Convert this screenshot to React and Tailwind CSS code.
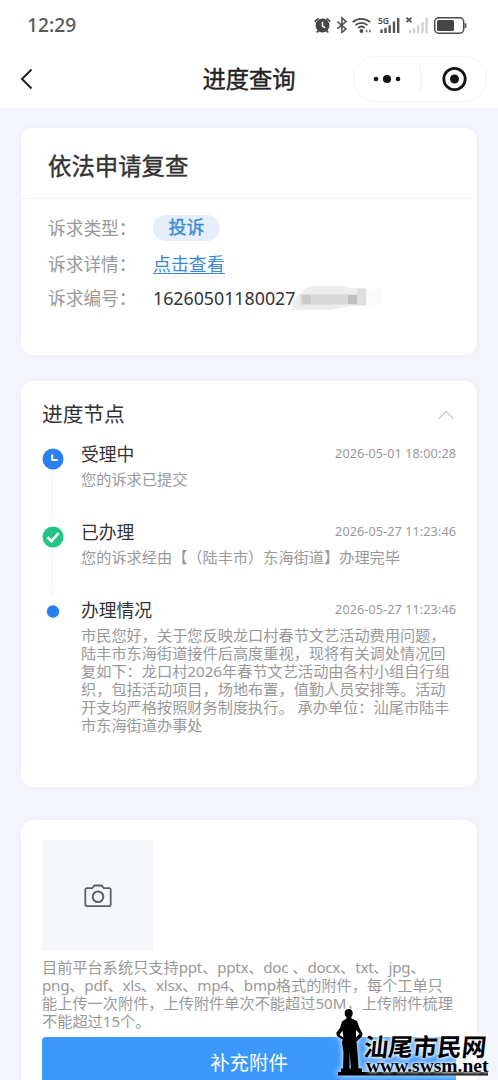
import React from 'react';
import { clsx } from 'clsx';

const StatusIcons = () => (
    <svg width="158" height="24" viewBox="0 0 158 24" className="block" fill="none">
        {/* alarm */}
        <circle cx="10.5" cy="12.5" r="6.9" fill="#454545" />
        <path d="M10.5 8.7v4.3l2.8 1.8" stroke="#fff" strokeWidth="1.5" />
        <path d="M2.7 8.6l3.8-3.3M18.3 8.6l-3.8-3.3M6.5 17.5l-1.7 2M14.500 17.500l1.700 2" stroke="#454545" strokeWidth="1.7" />
        {/* bluetooth */}
        <path d="M25.3 8.7l8.8 7.3-4.2 3.4V5l4.2 3.6-8.8 7.1" stroke="#555" strokeWidth="1.6" />
        {/* wifi */}
        <path d="M40.7 9.2c5-4.5 12.5-4.5 17.5 0M43.5 12.2c3.5-3.2 8.400-3.200 11.900 0M46.200 15c2-1.800 4.500-1.800 6.400 0" stroke="#4a4a4a" strokeWidth="1.8" />
        <circle cx="49.4" cy="18" r="1.9" fill="#4a4a4a" />
        <path d="M53 18l2.500-1.700v3.400zM59.500 18l-2.500-1.700v3.400z" fill="#777" />
        {/* signal */}
        <path d="M69.5 16.5v3.5M73.5 14.8v5.2M77.7 12.2v7.8M82 8.5v11.5M86.2 5v15" stroke="#555" strokeWidth="2.4" />
        <path d="M94.500 4.600l5 4.500M99.500 4.600l-5 4.500" stroke="#555" strokeWidth="1.8" />
        <path d="M98 17v3M102 15.200v4.800M106.200 12.500v7.500M110.500 9v11M114.600 5v15" stroke="#d2d2d2" strokeWidth="2.400" />
        {/* battery */}
        <rect x="122.700" y="4.800" width="29" height="15.400" rx="4" stroke="#4a4a4a" strokeWidth="1.500" />
        <rect x="125" y="7" width="17" height="11" rx="1.500" fill="#454545" />
        <path d="M153.500 10.300v4.600" stroke="#555" strokeWidth="1.800" />
    </svg>
);

const ClockDot = () => (
    <svg width="22" height="22" viewBox="0 0 22 22">
        <circle cx="11" cy="11" r="10.500" fill="#2b7ff0" />
        <path d="M10.200 6.500v5.600h5.500" fill="none" stroke="#fff" strokeWidth="2" />
    </svg>
);

const CheckDot = () => (
    <svg width="22" height="22" viewBox="0 0 22 22">
        <circle cx="11" cy="11" r="10.500" fill="#1ec684" />
        <path d="M5.300 11.200l4.200 3.900 7.100-8" fill="none" stroke="#fff" strokeWidth="2.800" />
    </svg>
);

const BlueDot = () => (
    <svg width="22" height="22" viewBox="0 0 22 22">
        <circle cx="11" cy="7.500" r="6.200" fill="#2b80f0" />
    </svg>
);

const Mosaic = () => (
    <svg width="96" height="30" viewBox="0 0 96 30" className="-ml-1 block">
        <path d="M8 11L18 3h34l5 2h18v18H60l-21 4H2V19z" fill="#eeeeee" />
        <path d="M9 11h66v11H9z" fill="#e0e0e0" />
        <path d="M11 12h9v9h-9z" fill="#cbcbcb" />
        <path d="M20 12h37v9H20z" fill="#d8d8d8" />
        <path d="M57 12h9v9h-9z" fill="#bfbfbf" />
        <path d="M66 6h9v16h-9z" fill="#dedede" />
        <path d="M75 6h16v16H75z" fill="#fbfbfb" />
    </svg>
);

const steps = [
    { title: '受理中', time: '2026-05-01 18:00:28', icon: ClockDot, lines: ['您的诉求已提交'] },
    { title: '已办理', time: '2026-05-27 11:23:46', icon: CheckDot, lines: ['您的诉求经由【（陆丰市）东海街道】办理完毕'] },
    {
        title: '办理情况',
        time: '2026-05-27 11:23:46',
        icon: BlueDot,
        lines: [
            '市民您好，关于您反映龙口村春节文艺活动费用问题，',
            '陆丰市东海街道接件后高度重视，现将有关调处情况回',
            '复如下：龙口村2026年春节文艺活动由各村小组自行组',
            '织，包括活动项目，场地布置，值勤人员安排等。活动',
            '开支均严格按照财务制度执行。 承办单位：汕尾市陆丰',
            '市东海街道办事处',
        ],
    },
];

const hints = [
    '目前平台系统只支持ppt、pptx、doc 、docx、txt、jpg、',
    'png、pdf、xls、xlsx、mp4、bmp格式的附件，每个工单只',
    '能上传一次附件，上传附件单次不能超过50M，上传附件梳理',
    '不能超过15个。',
];

// latin runs are set slightly tighter than the Chinese text
const Line = ({ text }) => (
    <p className="whitespace-nowrap">
        {text.split(/([a-z]+\d?)/).map((part, i) => (
            i % 2 ? <span key={i} className="tracking-[-0.3px]">{part}</span> : part
        ))}
    </p>
);

const Card = ({ className, children }) => (
    <section className={clsx('mx-[21px] rounded-xl bg-white shadow-[0_0_10px_rgba(0,0,0,0.045)]', className)}>
        {children}
    </section>
);

const Row = ({ label, className, children }) => (
    <div className={clsx('flex items-center', className)}>
        <span className="w-[105px] shrink-0 text-[17.7px] text-[#999]">{label}</span>
        {children}
    </div>
);

const Step = ({ step, last }) => {
    const Icon = step.icon;
    return (
        <div className={clsx('flex', !last && 'h-[78px]')}>
            <div className="flex w-[39px] shrink-0 flex-col items-start pt-[7px]">
                <Icon />
                {!last && <div className="ml-[10px] w-px flex-1 bg-[#f0f0f0]" />}
            </div>
            <div className="min-w-0 flex-1">
                <div className="flex h-[26px] items-center justify-between">
                    <h3 className="text-[17.8px] text-[#333]">{step.title}</h3>
                    <time className="text-[12.6px] tracking-[0.1px] text-[#999]">{step.time}</time>
                </div>
                <div className="mt-[3px] text-[15.2px] leading-[18px] text-[#999]">
                    {step.lines.map(line => <Line key={line} text={line} />)}
                </div>
            </div>
        </div>
    );
};

const Watermark = () => (
    <div className="absolute bottom-[4px] left-[334px] flex h-[70px] w-[156px] items-end">
        <svg width="156" height="70" viewBox="0 0 156 70" className="absolute bottom-0 left-0 overflow-visible drop-shadow-[0_0_3px_white]">
            <path d="M14.700 3c3 0 4.200 2 4 4.500-.2 1.800-.9 2.800-1.500 3.500l.3 1.500 5.500 2.500 2.500 7 3 5.500-.5 3-5.500 5 .5 5 1 13 .5 8.500 3 2.500v1H9l.5-19-1.500-10 .7-3-5.700-3.500-.8-3L6 22l2-6.500 4.500-3-.2-1.500c-1-.8-1.600-2-1.600-4 0-2.500 1.500-4 4-4zM8.500 24.500l-3 4.500 4 2.500zM22 24v7.500l3.500-4z" fill="#000" fillRule="evenodd" />
            <path d="M15.500 45l1.500 18h-1.500z" fill="#8fc1ff" />
            <path d="M7 62.500h21V67H7zM4 66h150v3.500H4z" fill="#000" />
        </svg>
        <div className="relative ml-[30px] w-[126px] text-black [text-shadow:0_0_3px_white,0_0_4px_white,0_0_6px_white]">
            <p className="-skew-x-6 font-['Noto_Sans_CJK_SC',sans-serif] text-[24.5px] leading-[26px] font-bold whitespace-nowrap">汕尾市民网</p>
            <p className="-mt-[4px] ml-[2px] font-['Liberation_Serif',serif] text-[19.5px] leading-[21px] font-bold whitespace-nowrap">www.swsm.net</p>
        </div>
    </div>
);

const App = () => (
    <div className="relative flex h-[1080px] w-[498px] flex-col overflow-hidden bg-[#f4f6fb] font-['Noto_Sans','Noto_Sans_CJK_SC',sans-serif] [text-spacing-trim:space-all]">
        <header className="h-[108px] shrink-0 bg-white">
            <div className="flex h-[50px] items-center justify-between pr-[28px] pl-[27px]">
                <span className="text-[19.2px] font-medium text-[#5a5a5a]">12:29</span>
                <div className="relative">
                    <StatusIcons />
                    <span className="absolute top-[3px] left-[66px] text-[8.5px] leading-[10px] font-semibold text-[#444]">5G</span>
                </div>
            </div>
            <div className="grid grid-cols-3 items-center pt-[5px]">
                <svg width="14" height="22" viewBox="0 0 14 22" className="ml-5">
                    <path d="M11.500 1.500L2 11l9.500 9.500" fill="none" stroke="#222" strokeWidth="2" />
                </svg>
                <h1 className="pt-px text-center text-[23.3px] leading-[46px] whitespace-nowrap text-[#222] [-webkit-text-stroke:0.4px]">进度查询</h1>
                <div className="mr-[11px] flex h-[46px] w-[134px] items-center justify-self-end rounded-full border border-[#f4f4f4]">
                    <svg width="132" height="44" viewBox="0 0 132 44">
                        <circle cx="22" cy="22" r="2.300" fill="#151515" />
                        <circle cx="33" cy="22" r="4.100" fill="#151515" />
                        <circle cx="44" cy="22" r="2.300" fill="#151515" />
                        <path d="M66.500 8v28" stroke="#eee" />
                        <circle cx="100.500" cy="22" r="10.700" fill="none" stroke="#151515" strokeWidth="2.800" />
                        <circle cx="100.500" cy="22" r="4.500" fill="#151515" />
                    </svg>
                </div>
            </div>
        </header>

        <Card className="mt-5 h-[227px] shrink-0">
            <h2 className="h-[71px] border-b border-[#f3f3f3] pt-[3px] pl-[27px] text-[23.4px] leading-[70px] text-[#333] [-webkit-text-stroke:0.4px]">依法申请复查</h2>
            <div className="pl-[27px]">
                <Row label="诉求类型：" className="mt-[11px] h-9">
                    <span className="h-[26px] w-[67px] rounded-full bg-[#e5effb] text-center text-[18px] leading-[25px] text-[#3989d8] [-webkit-text-stroke:0.3px]">投诉</span>
                </Row>
                <Row label="诉求详情：" className="h-9">
                    <a className="border-b-[1.5px] border-[#3989d8] text-[17.9px] leading-[18px] text-[#3989d8]">点击查看</a>
                </Row>
                <Row label="诉求编号：" className="h-8">
                    <span className="text-[17.8px] text-[#333]">16260501180027</span>
                    <Mosaic />
                </Row>
            </div>
        </Card>

        <Card className="mt-[26px] h-[406px] shrink-0 pr-[21px] pl-[21px]">
            <div className="flex h-[60px] items-center justify-between pt-[7px]">
                <h2 className="text-[20.7px] text-[#333]">进度节点</h2>
                <svg width="18" height="12" viewBox="0 0 18 12" className="mr-px">
                    <path d="M1.500 10L9 2.500l7.500 7.500" fill="none" stroke="#ccc" strokeWidth="1.400" />
                </svg>
            </div>
            <div>
                {steps.map((step, i) => (
                    <Step key={step.title} step={step} last={i === steps.length - 1} />
                ))}
            </div>
        </Card>

        <Card className="mt-[33px] h-[300px] shrink-0 px-[21px] pt-5">
            <div className="flex h-[111px] w-[111px] items-center justify-center bg-[#f6f7fb]">
                <svg width="28" height="24" viewBox="0 0 28 24" fill="none" stroke="#5c6065" strokeWidth="1.800">
                    <path d="M3 4.200h5.200L10.200 1.500h7.600l2 2.700H25a1.700 1.700 0 0 1 1.700 1.700v14.600a1.700 1.700 0 0 1-1.700 1.700H3a1.700 1.700 0 0 1-1.700-1.700V5.900A1.700 1.700 0 0 1 3 4.200z" strokeLinejoin="round" />
                    <circle cx="14" cy="12.800" r="5.300" strokeWidth="2" />
                </svg>
            </div>
            <div className="mt-[7px] text-[15.2px] leading-[18px] text-[#999]">
                {hints.map(line => <Line key={line} text={line} />)}
            </div>
            <button className="mt-[7px] block h-[52px] w-full rounded bg-[#3d98fc] text-[19.4px] leading-[52px] text-white">补充附件</button>
        </Card>

        <Watermark />
    </div>
);

export default App;
